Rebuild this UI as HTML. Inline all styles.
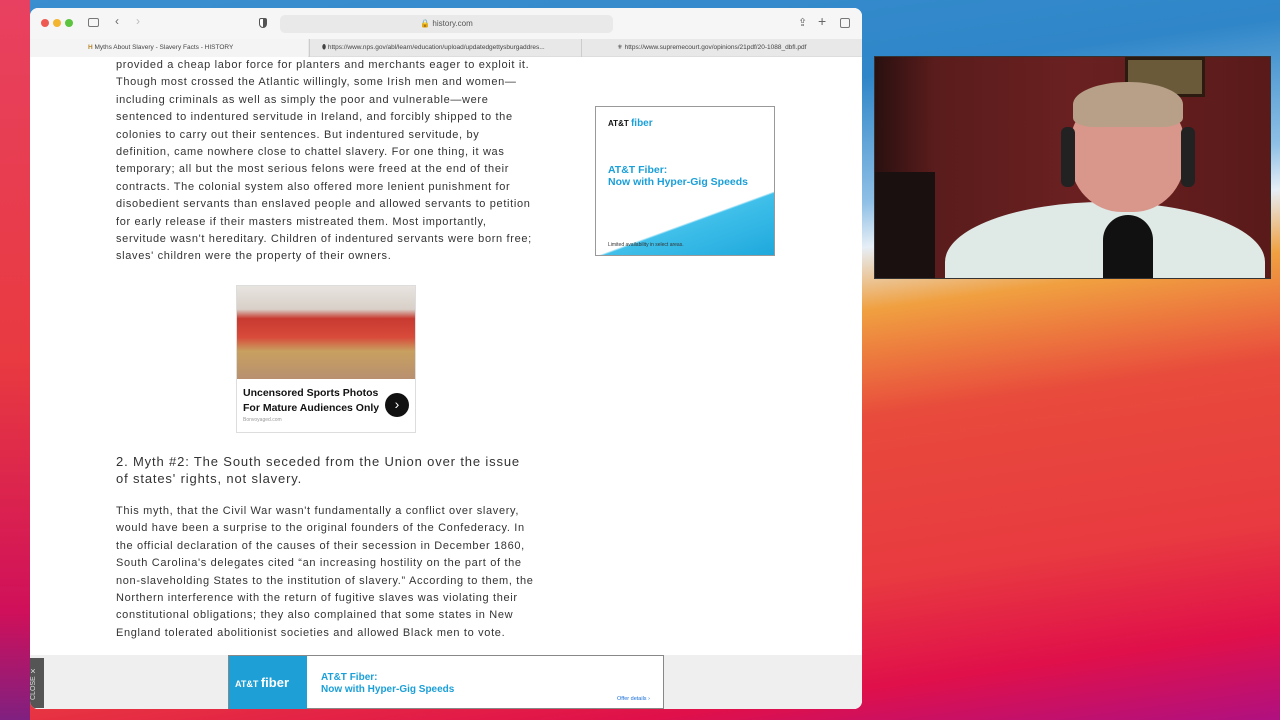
<!DOCTYPE html>
<html><head><meta charset="utf-8"><style>
*{margin:0;padding:0;box-sizing:border-box}
body{width:1280px;height:720px;overflow:hidden;position:relative;font-family:"Liberation Sans",sans-serif;
background:linear-gradient(172deg,#3a8fd0 0%,#2f86c8 22%,#8fc0e6 36%,#e6eef6 41%,#f0a040 48%,#e84a3c 60%,#e83a40 78%,#e0104a 90%,#b01080 100%)}
.left{position:absolute;left:0;top:0;width:30px;height:720px;background:linear-gradient(180deg,#e84060 0%,#e83a40 50%,#d0105a 85%,#802080 100%)}
.win{position:absolute;left:30px;top:8px;width:832px;height:701px;background:#fff;border-radius:8px;overflow:hidden}
.tb{height:31px;background:#f6f6f6;position:relative}
.dot{position:absolute;top:11px;width:8px;height:8px;border-radius:50%}
.url{position:absolute;left:250px;top:7px;width:333px;height:18px;background:#e9e9e9;border-radius:5px;font-size:8px;color:#555;text-align:center;line-height:18px}
.tabs{height:18px;background:#e8e8e8;position:relative;font-size:6.5px;color:#444;border-bottom:1px solid #ddd}
.tab{position:absolute;top:0;height:18px;line-height:18px;white-space:nowrap;overflow:hidden}
.p{position:absolute;left:86px;font-size:11px;line-height:17.4px;color:#333;letter-spacing:.66px;white-space:nowrap}
.h{position:absolute;left:86px;top:445px;font-size:13px;line-height:17px;color:#333;letter-spacing:.85px;white-space:nowrap}
.cam{position:absolute;left:874px;top:56px;width:397px;height:223px;background:linear-gradient(90deg,#2a1010 0%,#5a1c1c 15%,#6a2020 50%,#5a1a1a 100%);border:1px solid #333;overflow:hidden}
</style></head><body>
<div class="left"></div>
<div class="win">
 <div class="tb">
  <div class="dot" style="left:11px;background:#ee5a52"></div>
  <div class="dot" style="left:23px;background:#f3b52f"></div>
  <div class="dot" style="left:35px;background:#5cc43f"></div>
  <div style="position:absolute;left:58px;top:10px;width:11px;height:9px;border:1px solid #777;border-radius:2px"></div>
  <div style="position:absolute;left:85px;top:6px;font-size:12px;color:#666">‹</div>
  <div style="position:absolute;left:106px;top:6px;font-size:12px;color:#bbb">›</div>
  <div style="position:absolute;left:229px;top:10px;width:8px;height:10px;border:1px solid #555;border-radius:2px 2px 4px 4px;background:linear-gradient(90deg,#fff 50%,#555 50%)"></div>
  <div class="url">🔒 history.com</div>
  <div style="position:absolute;left:768px;top:8px;font-size:11px;color:#666">⇪</div>
  <div style="position:absolute;left:788px;top:5px;font-size:14px;color:#666">+</div>
  <div style="position:absolute;left:810px;top:10px;width:10px;height:10px;border:1px solid #777;border-radius:2px"></div>
 </div>
 <div class="tabs">
  <div class="tab" style="left:0;width:278px;background:#f4f4f4;padding-left:58px"><span style="color:#b8862b;font-weight:bold">H</span> Myths About Slavery - Slavery Facts - HISTORY</div>
  <div class="tab" style="left:279px;width:271px;padding-left:12px;border-left:1px solid #ccc">⬮ https://www.nps.gov/abl/learn/education/upload/updatedgettysburgaddres...</div>
  <div class="tab" style="left:551px;width:281px;padding-left:35px;border-left:1px solid #ccc">⚜ https://www.supremecourt.gov/opinions/21pdf/20-1088_dbfl.pdf</div>
 </div>
 <div class="p" style="top:49px">provided a cheap labor force for planters and merchants eager to exploit it.<br>Though most crossed the Atlantic willingly, some Irish men and women—<br>including criminals as well as simply the poor and vulnerable—were<br>sentenced to indentured servitude in Ireland, and forcibly shipped to the<br>colonies to carry out their sentences. But indentured servitude, by<br>definition, came nowhere close to chattel slavery. For one thing, it was<br>temporary; all but the most serious felons were freed at the end of their<br>contracts. The colonial system also offered more lenient punishment for<br>disobedient servants than enslaved people and allowed servants to petition<br>for early release if their masters mistreated them. Most importantly,<br>servitude wasn't hereditary. Children of indentured servants were born free;<br>slaves' children were the property of their owners.</div>
 <div style="position:absolute;left:565px;top:98px;width:180px;height:150px;border:1px solid #999;background:linear-gradient(160deg,#fff 70%,#40c0ea 71%,#1fa8dc 100%);font-weight:bold">
  <div style="position:absolute;left:12px;top:11px;font-size:8px;color:#111">AT&amp;T <span style="color:#1a9fd8;font-size:10px">fiber</span></div>
  <div style="position:absolute;left:12px;top:57px;font-size:10.5px;line-height:12px;color:#1a9fd8">AT&amp;T Fiber:<br>Now with Hyper-Gig Speeds</div>
  <div style="position:absolute;left:12px;top:135px;font-size:5px;color:#333;font-weight:normal">Limited availability in select areas.</div>
 </div>
 <div style="position:absolute;left:206px;top:277px;width:180px;height:148px;border:1px solid #ddd;background:#fff">
  <div style="height:93px;background:linear-gradient(180deg,#e8e4e0 0%,#d8d0c8 25%,#c83a30 35%,#d84a3a 55%,#c8a060 70%,#b89070 100%)"></div>
  <div style="position:absolute;left:6px;top:100px;font-size:10.5px;font-weight:bold;line-height:15px;color:#111">Uncensored Sports Photos<br>For Mature Audiences Only</div>
  <div style="position:absolute;left:148px;top:107px;width:24px;height:24px;border-radius:50%;background:#111;color:#fff;text-align:center;line-height:22px;font-size:14px">›</div>
  <div style="position:absolute;left:6px;top:131px;font-size:5px;color:#999">Bonvoyaged.com</div>
 </div>
 <div class="h">2. Myth #2: The South seceded from the Union over the issue<br>of states' rights, not slavery.</div>
 <div class="p" style="top:495px">This myth, that the Civil War wasn't fundamentally a conflict over slavery,<br>would have been a surprise to the original founders of the Confederacy. In<br>the official declaration of the causes of their secession in December 1860,<br>South Carolina's delegates cited “an increasing hostility on the part of the<br>non-slaveholding States to the institution of slavery.” According to them, the<br>Northern interference with the return of fugitive slaves was violating their<br>constitutional obligations; they also complained that some states in New<br>England tolerated abolitionist societies and allowed Black men to vote.</div>
 <div style="position:absolute;left:0;top:647px;width:832px;height:54px;background:#efefef">
  <div style="position:absolute;left:0;top:3px;width:14px;height:50px;background:#555;color:#ddd;font-size:7px;writing-mode:vertical-rl;transform:rotate(180deg);text-align:center">CLOSE ✕</div>
  <div style="position:absolute;left:198px;top:0;width:436px;height:54px;background:#fff;border:1px solid #888">
   <div style="position:absolute;left:0;top:0;width:78px;height:54px;background:#1e9fd6;color:#fff;font-weight:bold;font-size:9px;line-height:54px;padding-left:6px">AT&amp;T <span style="font-size:13px">fiber</span></div>
   <div style="position:absolute;left:92px;top:16px;font-size:10px;line-height:12px;font-weight:bold;color:#1a9fd8">AT&amp;T Fiber:<br>Now with Hyper-Gig Speeds</div>
   <div style="position:absolute;left:388px;top:40px;font-size:5.5px;color:#1a6fd8">Offer details ›</div>
  </div>
 </div>
</div>
<div class="cam">
 <div style="position:absolute;left:250px;top:0;width:80px;height:40px;background:#6a5a3a;border:3px solid #2a1a10"></div>
 <div style="position:absolute;left:0;top:115px;width:60px;height:110px;background:#1a1010"></div>
 <div style="position:absolute;left:70px;top:145px;width:320px;height:120px;border-radius:50% 50% 0 0;background:#dfe9e6"></div>
 <div style="position:absolute;left:195px;top:35px;width:115px;height:120px;border-radius:45%;background:#d9968a"></div>
 <div style="position:absolute;left:198px;top:25px;width:110px;height:45px;border-radius:50% 50% 20% 20%;background:#b8a088"></div>
 <div style="position:absolute;left:186px;top:70px;width:14px;height:60px;background:#222;border-radius:6px"></div>
 <div style="position:absolute;left:306px;top:70px;width:14px;height:60px;background:#222;border-radius:6px"></div>
 <div style="position:absolute;left:228px;top:158px;width:50px;height:70px;background:#111;border-radius:25px 25px 0 0"></div>
</div>
</body></html>
